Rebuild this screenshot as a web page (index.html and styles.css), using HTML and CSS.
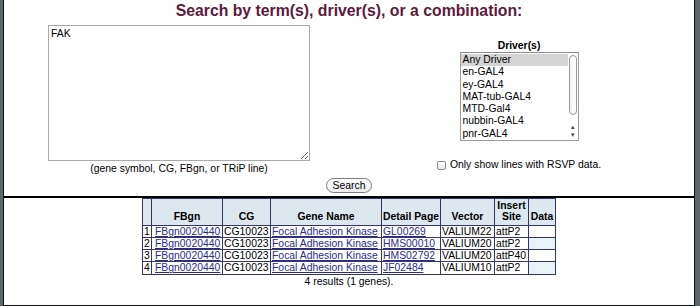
FILE: index.html
```html
<!DOCTYPE html>
<html lang="en">
  <head>
    <meta charset="UTF-8" />
    <title>TRiP Search</title>
    <link rel="stylesheet" href="styles.css">
  </head>
  <body>
    <div class="page">
      <form class="search">
        <h1>Search by term(s), driver(s), or a combination:</h1>
        <div class="search-cols">
          <div class="terms">
            <textarea id="terms">FAK</textarea>
            <div class="hint">(gene symbol, CG, FBgn, or TRiP line)</div>
          </div>
          <div class="drivers">
            <div class="label">Driver(s)</div>
            <div class="driver-list">
              <div class="options">
                <div class="option selected">Any Driver</div>
                <div class="option">en-GAL4</div>
                <div class="option">ey-GAL4</div>
                <div class="option">MAT-tub-GAL4</div>
                <div class="option">MTD-Gal4</div>
                <div class="option">nubbin-GAL4</div>
                <div class="option">pnr-GAL4</div>
              </div>
              <div class="scroll">
                <div class="thumb"></div>
                <div class="arrows"><span>&#9652;</span><span>&#9662;</span></div>
              </div>
            </div>
            <label class="rsvp"><input type="checkbox" /> Only show lines with RSVP data.</label>
          </div>
        </div>
        <div class="submit"><button type="button">Search</button></div>
      </form>

      <div class="results">
        <table>
          <thead>
            <tr>
              <th class="c-num"></th>
              <th class="c-fbgn">FBgn</th>
              <th class="c-cg">CG</th>
              <th class="c-name">Gene Name</th>
              <th class="c-detail">Detail Page</th>
              <th class="c-vector">Vector</th>
              <th class="c-site">Insert<br>Site</th>
              <th class="c-data">Data</th>
            </tr>
          </thead>
          <tbody>
            <tr>
              <td class="num">1</td>
              <td class="fbgn"><a href="#">FBgn0020440</a></td>
              <td>CG10023</td>
              <td><a href="#">Focal Adhesion Kinase</a></td>
              <td><a href="#">GL00269</a></td>
              <td>VALIUM22</td>
              <td>attP2</td>
              <td></td>
            </tr>
            <tr>
              <td class="num">2</td>
              <td class="fbgn"><a href="#">FBgn0020440</a></td>
              <td>CG10023</td>
              <td><a href="#">Focal Adhesion Kinase</a></td>
              <td><a href="#">HMS00010</a></td>
              <td>VALIUM20</td>
              <td>attP2</td>
              <td></td>
            </tr>
            <tr>
              <td class="num">3</td>
              <td class="fbgn"><a href="#">FBgn0020440</a></td>
              <td>CG10023</td>
              <td><a href="#">Focal Adhesion Kinase</a></td>
              <td><a href="#">HMS02792</a></td>
              <td>VALIUM20</td>
              <td>attP40</td>
              <td></td>
            </tr>
            <tr>
              <td class="num">4</td>
              <td class="fbgn"><a href="#">FBgn0020440</a></td>
              <td>CG10023</td>
              <td><a href="#">Focal Adhesion Kinase</a></td>
              <td><a href="#">JF02484</a></td>
              <td>VALIUM10</td>
              <td>attP2</td>
              <td></td>
            </tr>
          </tbody>
        </table>
        <div class="count">4 results (1 genes).</div>
      </div>
    </div>
  </body>
</html>
```

FILE: styles.css
```css
body {
  margin: 0;
  background: #56686a;
  font-family: "Liberation Sans", Arial, sans-serif;
  font-size: 10.4px;
  color: #000;
}
.page {
  margin: 0 5px 3px 3px;
  background: #fff;
  border: 1px solid #111;
  border-top: none;
}
.search {
  margin: 0;
  height: 196px;
}
h1 {
  margin: 0;
  padding-top: 2px;
  text-align: center;
  font-size: 15.8px;
  line-height: 18px;
  color: #5c1a3c;
}
.search-cols {
  display: grid;
  grid-template-columns: 1fr 1fr;
  margin-top: 5px;
}
.terms {
  padding-left: 5px;
  text-align: center;
}
.terms textarea {
  display: block;
  box-sizing: border-box;
  width: 262px;
  height: 136px;
  margin: 0 auto;
  padding: 2px;
  border: 1px solid #a9a9a9;
  font-family: "Liberation Sans", Arial, sans-serif;
  font-size: 10.4px;
  line-height: 12px;
  outline: none;
}
.hint {
  margin-top: 2px;
  line-height: 12px;
}
.drivers {
  padding-right: 5px;
  margin-top: 15px;
  display: flex;
  flex-direction: column;
  align-items: center;
}
.label {
  font-weight: bold;
  line-height: 12px;
}
.driver-list {
  display: flex;
  box-sizing: border-box;
  width: 119px;
  height: 89px;
  border: 1px solid #9c9c9c;
  border-top-color: #8a8a8a;
  overflow: hidden;
}
.options {
  flex: 1;
  padding-top: 1px;
}
.option {
  line-height: 12.3px;
  padding-left: 2px;
}
.option.selected {
  background: #d4d4d4;
}
.scroll {
  width: 10px;
  display: flex;
  flex-direction: column;
  align-items: center;
  padding-top: 2px;
}
.thumb {
  width: 6px;
  height: 58px;
  border: 1px solid #9a9a9a;
  border-radius: 4px;
  background: linear-gradient(to right, #f4f4f4, #ffffff);
}
.arrows {
  margin-top: auto;
  display: flex;
  flex-direction: column;
  font-size: 7px;
  line-height: 8px;
  color: #444;
  padding-bottom: 1px;
}
.rsvp {
  margin-top: 18px;
  line-height: 12px;
  display: flex;
  align-items: center;
  gap: 4px;
}
.rsvp input {
  appearance: none;
  margin: 0;
  width: 9px;
  height: 9px;
  border: 1px solid #8c8c8c;
  border-radius: 2px;
  background: linear-gradient(#fff, #e8e8e8);
}
.submit {
  text-align: center;
  margin-top: 3px;
}
.submit button {
  box-sizing: border-box;
  width: 46px;
  height: 15px;
  padding: 0;
  border: 1px solid #7a7a7a;
  border-radius: 8px;
  background: linear-gradient(#ffffff, #ececec);
  font-family: "Liberation Sans", Arial, sans-serif;
  font-size: 10.4px;
  line-height: 13px;
  color: #000;
}
.results {
  border-top: 2px solid #000;
  padding-bottom: 17px;
}
table {
  margin: 0 auto;
  border-collapse: collapse;
  table-layout: fixed;
  width: 414px;
}
th,
td {
  border: 1px solid #343466;
  padding: 0 1px;
  line-height: 11.3px;
  white-space: nowrap;
  text-align: left;
  overflow: hidden;
}
th {
  background: #dde8ee;
  text-align: center;
  vertical-align: bottom;
  font-weight: bold;
  padding-top: 1px;
  padding-bottom: 2px;
}
td.num {
  text-align: center;
}
td.fbgn {
  padding-left: 3px;
}
tbody tr:nth-child(even) td:last-child {
  background: #e8f3f8;
}
.c-num { width: 6px; }
.c-fbgn { width: 68px; }
.c-cg { width: 45px; }
.c-name { width: 108px; }
.c-detail { width: 56px; }
.c-vector { width: 51px; }
.c-site { width: 31px; }
.c-data { width: 24px; }
a {
  color: #2b2b8c;
}
.count {
  text-align: center;
  line-height: 12px;
  margin-top: 1px;
}
```
